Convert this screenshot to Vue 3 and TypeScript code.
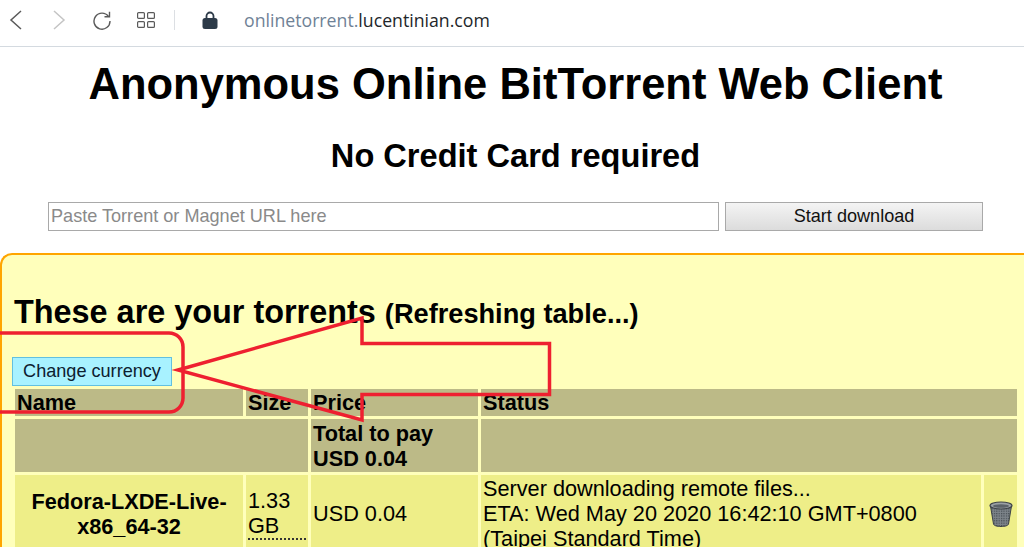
<template>
  <div class="page">
    <header class="browser-bar">
      <svg class="nav-icon back" width="16" height="24" viewBox="0 0 16 24">
        <path d="M13 3 3 12l10 9" fill="none" stroke="#5a5a5a" stroke-width="1.5" />
      </svg>
      <svg class="nav-icon forward" width="16" height="24" viewBox="0 0 16 24">
        <path d="M3 3l10 9-10 9" fill="none" stroke="#c4c4c4" stroke-width="1.5" />
      </svg>
      <svg class="nav-icon reload" width="20" height="20" viewBox="0 0 20 20">
        <path d="M16.5 6.5A8 8 0 1 0 18 11" fill="none" stroke="#5a5a5a" stroke-width="1.4" />
        <path d="M12.5 6.8h5v-5" fill="none" stroke="#5a5a5a" stroke-width="1.4" />
      </svg>
      <svg class="nav-icon tabs" width="20" height="18" viewBox="0 0 20 18">
        <g fill="none" stroke="#5a5a5a" stroke-width="1.2">
          <rect x="1.6" y="1.6" width="6.8" height="5.8" rx="1" />
          <rect x="11.6" y="1.6" width="6.8" height="5.8" rx="1" />
          <rect x="1.6" y="10.6" width="6.8" height="5.8" rx="1" />
          <rect x="11.6" y="10.6" width="6.8" height="5.8" rx="1" />
        </g>
      </svg>
      <span class="divider"></span>
      <svg class="nav-icon lock" width="16" height="20" viewBox="0 0 16 20">
        <path d="M4.5 9V6a3.5 3.5 0 0 1 7 0v3" fill="none" stroke="#2c3a48" stroke-width="1.8" />
        <rect x="0.5" y="8" width="15" height="11" rx="2.5" fill="#2c3a48" />
      </svg>
      <span class="url"><span class="url-dim">onlinetorrent.</span>lucentinian.com</span>
    </header>

    <main class="content">
      <h1>Anonymous Online BitTorrent Web Client</h1>
      <h2>No Credit Card required</h2>

      <form class="add-form" @submit.prevent>
        <input class="url-input" type="text" placeholder="Paste Torrent or Magnet URL here" />
        <button class="start-btn" type="submit">Start download</button>
      </form>

      <section class="panel">
        <h3 class="panel-title">These are your torrents <small>(Refreshing table...)</small></h3>
        <button class="currency-btn" type="button">Change currency</button>

        <table class="torrents">
          <colgroup>
            <col class="col-name" />
            <col class="col-size" />
            <col class="col-price" />
            <col />
            <col class="col-trash" />
          </colgroup>
          <thead>
            <tr class="head-row">
              <th>Name</th>
              <th>Size</th>
              <th>Price</th>
              <th colspan="2">Status</th>
            </tr>
            <tr class="total-row">
              <th colspan="2"></th>
              <th>Total to pay<br />USD {{ total }}</th>
              <th colspan="2"></th>
            </tr>
          </thead>
          <tbody>
            <tr v-for="t in torrents" :key="t.name">
              <td class="name">{{ t.name }}</td>
              <td><div class="size">{{ t.size }}</div></td>
              <td>USD {{ t.price }}</td>
              <td>
                Server downloading remote files...<br />
                ETA: {{ t.eta }}
              </td>
              <td class="trash">
                <svg width="24" height="26" viewBox="0 0 24 26">
                  <defs>
                    <pattern id="mesh" width="2.4" height="2.4" patternUnits="userSpaceOnUse">
                      <rect width="2.4" height="2.4" fill="#7d848a" />
                      <rect width="1.2" height="1.2" fill="#454c52" />
                    </pattern>
                  </defs>
                  <path d="M1.5 5 4.5 23c.3 1.6 3.5 2.5 7.5 2.5s7.2-.9 7.500-2.500L22.500 5z" fill="url(#mesh)" stroke="#3c4247" />
                  <ellipse cx="12" cy="4.500" rx="11" ry="3.500" fill="#9aa0a5" stroke="#3c4247" stroke-width="1.200" />
                  <ellipse cx="12" cy="5" rx="8" ry="1.800" fill="#5b6268" />
                </svg>
              </td>
            </tr>
          </tbody>
        </table>
      </section>
    </main>

    <svg class="annotation" width="1024" height="547" viewBox="0 0 1024 547">
      <g fill="none" stroke="#ee2030" stroke-width="3.500">
        <path d="M0 333H169a14 14 0 0 1 14 14V398a14 14 0 0 1-14 14H0" />
        <path d="M178 370 362 318V343.500H549.500V394.500H362V420Z" stroke-linejoin="miter" />
      </g>
    </svg>
  </div>
</template>

<script setup lang="ts">
interface Torrent {
  name: string
  size: string
  price: string
  eta: string
}

const total = '0.04'

const torrents: Torrent[] = [
  {
    name: 'Fedora-LXDE-Live-x86_64-32',
    size: '1.33 GB',
    price: '0.04',
    eta: 'Wed May 20 2020 16:42:10 GMT+0800 (Taipei Standard Time)'
  }
]
</script>

<style>
html,
body {
  margin: 0;
  height: 547px;
  overflow: hidden;
  background: #fff;
}
</style>

<style scoped>
.page {
  position: relative;
  width: 1024px;
  height: 547px;
  overflow: hidden;
  font-family: "Liberation Sans", Arial, sans-serif;
  color: #000;
}

.browser-bar {
  display: flex;
  align-items: center;
  height: 39px;
  padding: 0 0 7px 8px;
  border-bottom: 1px solid #d4dae0;
  box-sizing: content-box;
}

.nav-icon {
  flex: none;
}

.forward {
  margin-left: 27px;
}

.reload {
  margin-left: 25px;
}

.tabs {
  margin-left: 24px;
}

.divider {
  width: 1px;
  height: 20px;
  margin-left: 18px;
  background: #dcdfe3;
}

.lock {
  margin-left: 27px;
}

.url {
  margin-left: 26px;
  font-family: "Open Sans", sans-serif;
  font-size: 17.7px;
  color: #22262a;
}

.url-dim {
  color: #6f8296;
}

.content {
  display: flex;
  flex-direction: column;
  align-items: center;
}

h1 {
  margin: 12px 0 0;
  padding-left: 7px;
  font-size: 43.5px;
  line-height: 50px;
  font-weight: 700;
  text-align: center;
}

h2 {
  margin: 28px 0 0;
  padding-left: 7px;
  font-size: 32.6px;
  line-height: 37px;
  font-weight: 700;
  text-align: center;
}

.add-form {
  display: flex;
  gap: 6px;
  margin: 28px 0 0;
  align-self: flex-start;
  padding-left: 48px;
}

.url-input {
  width: 671px;
  height: 29px;
  box-sizing: border-box;
  padding: 0 2px;
  border: 1px solid #a9a9a9;
  background: #fff;
  font-family: inherit;
  font-size: 18.1px;
  outline: none;
}

.url-input::placeholder {
  color: #8a8a8a;
  opacity: 1;
}

.start-btn {
  width: 258px;
  height: 29px;
  box-sizing: border-box;
  border: 1px solid #a9a9a9;
  background: linear-gradient(#f4f4f4, #dcdcdc);
  font-family: inherit;
  font-size: 18.1px;
  color: #111;
}

.panel {
  align-self: stretch;
  box-sizing: border-box;
  width: 1040px;
  margin-top: 22px;
  height: 320px;
  padding: 23px 0 0 12px;
  background: #ffffbb;
  border: 2px solid #ffa500;
  border-right: none;
  border-bottom: none;
  border-radius: 12px 0 0 0;
}

.panel-title {
  margin: 16px 0 0;
  font-size: 32.4px;
  line-height: 37px;
  font-weight: 700;
}

.panel-title small {
  font-size: 27.2px;
}

.currency-btn {
  display: block;
  width: 160px;
  height: 29px;
  margin: 25px 0 0 -2px;
  box-sizing: border-box;
  border: 1px solid #62c0e0;
  background: #a8f2ff;
  font-family: inherit;
  font-size: 18.1px;
  color: #0c2030;
}

.torrents {
  width: 1008px;
  margin: 0 0 0 -2px;
  table-layout: fixed;
  border-collapse: separate;
  border-spacing: 3px;
  font-size: 21.7px;
  line-height: 25px;
}

.col-name {
  width: 228px;
}

.col-size {
  width: 62px;
}

.col-price {
  width: 167px;
}

.col-trash {
  width: 33px;
}

.torrents th {
  padding: 1px 2px;
  background: #bcba87;
  text-align: left;
  font-weight: 700;
  vertical-align: top;
}

.torrents td {
  padding: 1px 2px;
  background: #eeee88;
  vertical-align: middle;
}

.head-row th {
  height: 25px;
}

.total-row th {
  padding-top: 2px;
}

.name {
  text-align: center;
  font-weight: 700;
}

.size {
  border-bottom: 2px dotted #333;
}

.trash {
  text-align: center;
}

.trash svg {
  display: block;
  margin: 0 auto;
}

.annotation {
  position: absolute;
  top: 0;
  left: 0;
  pointer-events: none;
}
</style>
